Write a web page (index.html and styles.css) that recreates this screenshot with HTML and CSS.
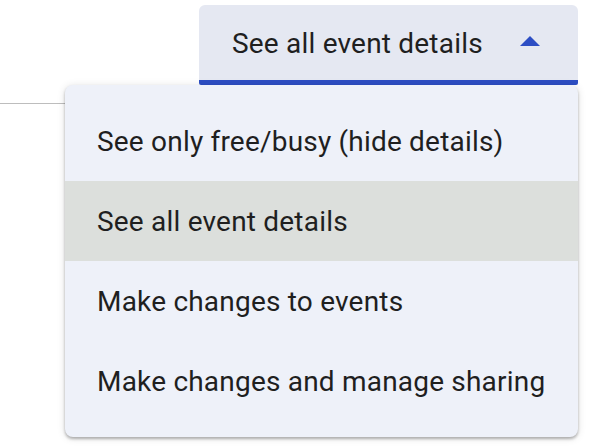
FILE: index.html
```html
<!DOCTYPE html>
<html>
<head>
<meta charset="utf-8">
<link rel="stylesheet" href="styles.css">
</head>
<body>
<div class="page">
  <div class="top">
    <button class="select">
      <span class="select-label">See all event details</span>
      <svg class="caret" width="20" height="10" viewBox="0 0 20 10"><path d="M0 10 L10 0 L20 10 Z" fill="#2d4ec4"/></svg>
    </button>
  </div>
  <div class="lower">
    <div class="rule"></div>
    <ul class="menu">
      <li class="item">See only free/busy (hide details)</li>
      <li class="item selected">See all event details</li>
      <li class="item">Make changes to events</li>
      <li class="item">Make changes and manage sharing</li>
    </ul>
  </div>
</div>
</body>
</html>
```
FILE: styles.css
```css
html, body {
  margin: 0;
  padding: 0;
  background: #ffffff;
}
body {
  font-family: Roboto, "Noto Sans", sans-serif;
  color: #1f1f1f;
  width: 590px;
  height: 446px;
  overflow: hidden;
}
.page {
  display: flex;
  flex-direction: column;
  padding-top: 5px;
}
.top {
  display: flex;
  justify-content: flex-start;
  padding-left: 199px;
}
.select {
  width: 379px;
  height: 80px;
  box-sizing: border-box;
  display: flex;
  align-items: center;
  justify-content: space-between;
  padding: 0 38px 0 33px;
  background: #e5e8f2;
  border: none;
  border-bottom: 5px solid #2d4ec4;
  border-radius: 6px 6px 2px 2px;
  font-family: inherit;
  font-size: 28px;
  letter-spacing: 0.2px;
  color: #1f1f1f;
  cursor: pointer;
}
.select-label {
  padding-top: 2px;
}
.caret {
  display: block;
  margin-top: -3px;
}
.lower {
  display: flex;
  align-items: flex-start;
}
.rule {
  width: 66px;
  height: 1px;
  margin-top: 18px;
  background: #bdbdbd;
  flex-shrink: 0;
}
.menu {
  list-style: none;
  margin: 0 0 0 -1px;
  padding: 16px 0;
  width: 513px;
  background: #eef1f9;
  border-radius: 8px;
  box-shadow: 0 2px 3px rgba(0,0,0,0.28), 0 1px 8px rgba(0,0,0,0.12);
}
.item {
  height: 80px;
  display: flex;
  align-items: center;
  padding-left: 32px;
  font-size: 28px;
  letter-spacing: 0.2px;
  color: #1f1f1f;
}
.item.selected {
  background: #dcdfdc;
}
```
